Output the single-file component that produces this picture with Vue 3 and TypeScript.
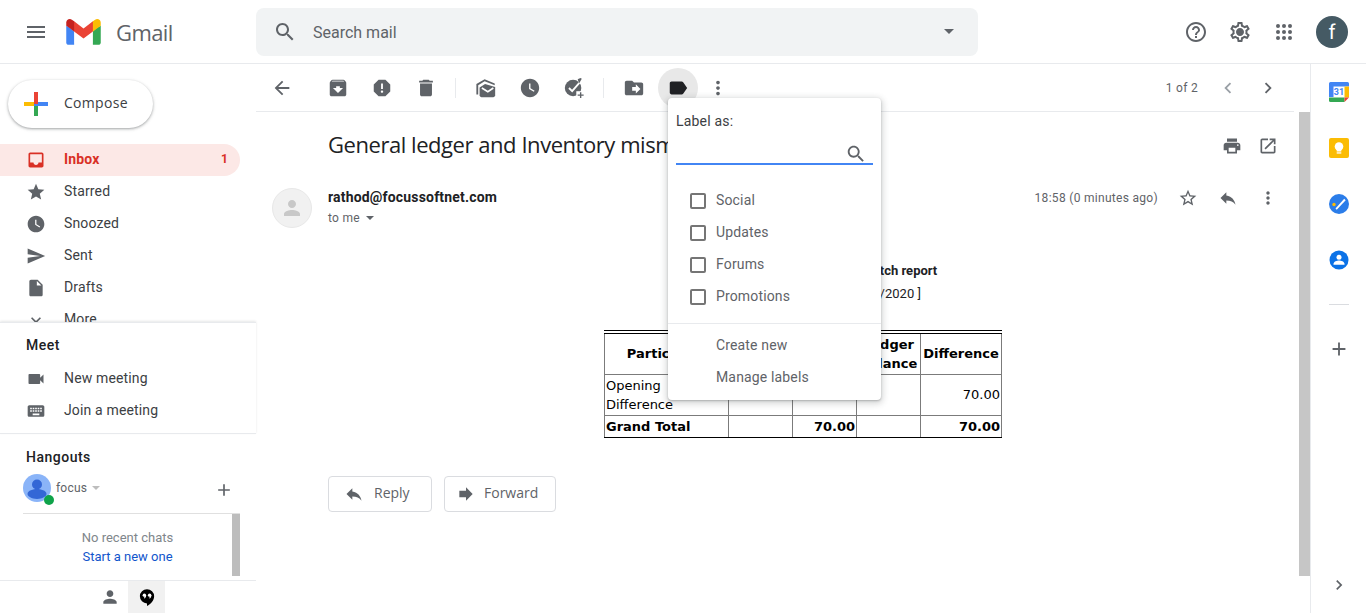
<template>
  <div class="app">
    <header class="topbar">
      <div class="brand">
        <button class="menu-btn"><svg class="ic" viewBox="0 0 24 24"><path :d="icons.menu" /></svg></button>
        <svg class="logo" viewBox="0 0 256 193">
          <path fill="#4285F4" d="M58.182 192.05V93.14L27.507 65.077 0 49.504v125.091c0 9.658 7.825 17.455 17.455 17.455h40.727z" />
          <path fill="#34A853" d="M197.818 192.05h40.727c9.659 0 17.455-7.826 17.455-17.455V49.505l-31.156 17.837-27.026 25.798v98.91z" />
          <path fill="#EA4335" d="M58.182 93.14l-4.174-38.647 4.174-36.989L128 69.868l69.818-52.364 4.669 34.992-4.669 40.644L128 145.504z" />
          <path fill="#FBBC04" d="M197.818 17.504V93.14L256 49.504V26.231c0-21.585-24.64-33.89-41.89-20.945l-16.292 12.218z" />
          <path fill="#C5221F" d="M0 49.504l26.759 20.07L58.182 93.14V17.504L41.89 5.286C24.61-7.66 0 4.646 0 26.23v23.273z" />
        </svg>
        <span class="wordmark">Gmail</span>
      </div>
      <div class="search">
        <svg class="ic search-ic" viewBox="0 0 24 24"><path :d="icons.search" /></svg>
        <span class="search-text">Search mail</span>
        <span class="caret search-caret"></span>
      </div>
      <div class="top-actions">
        <svg class="ic top-ic" viewBox="0 0 24 24"><path :d="icons.help" /></svg>
        <svg class="ic top-ic" viewBox="0 0 24 24"><path :d="icons.settings" /></svg>
        <svg class="ic top-ic" viewBox="0 0 24 24">
          <circle v-for="d in appDots" :key="d[0] + '-' + d[1]" :cx="d[0]" :cy="d[1]" r="2" />
        </svg>
        <div class="account">f</div>
      </div>
    </header>

    <div class="body">
      <aside class="sidebar">
        <div class="side-top">
          <button class="compose">
            <svg class="plus" viewBox="0 0 24 24">
              <rect x="0" y="10" width="10" height="4" fill="#fbbc04" />
              <rect x="14" y="10" width="10" height="4" fill="#4285f4" />
              <rect x="10" y="14" width="4" height="10" fill="#34a853" />
              <rect x="10" y="10" width="4" height="4" fill="#4285f4" />
              <rect x="10" y="0" width="4" height="12" fill="#ea4335" />
            </svg>
            <span class="compose-text">Compose</span>
          </button>
          <nav class="nav">
            <div v-for="item in navItems" :key="item.label" class="nav-row" :class="{ active: item.count }">
              <svg class="ic nav-ic" viewBox="0 0 24 24"><path :d="item.icon" /></svg>
              <span class="nav-label">{{ item.label }}</span>
              <span v-if="item.count" class="nav-count">{{ item.count }}</span>
            </div>
          </nav>
        </div>

        <section class="meet">
          <h3>Meet</h3>
          <div class="meet-row">
            <svg class="ic nav-ic" viewBox="0 0 24 24"><path :d="icons.video" /></svg>
            <span class="nav-label">New meeting</span>
          </div>
          <div class="meet-row">
            <svg class="ic nav-ic" viewBox="0 0 24 24"><path :d="icons.keyboard" /></svg>
            <span class="nav-label">Join a meeting</span>
          </div>
        </section>

        <section class="hangouts">
          <h3>Hangouts</h3>
          <div class="hang-user">
            <div class="hang-avatar">
              <svg viewBox="0 0 28 28" width="28" height="28">
                <circle cx="14" cy="14" r="14" fill="#8ab4f8" />
                <circle cx="14" cy="10.5" r="5" fill="#3367d6" />
                <path d="M4.5 20c0-3.600 6-5 9.500-5s9.500 1.400 9.500 5c0 2-4 5-9.500 5S4.500 22 4.500 20z" fill="#3367d6" />
              </svg>
              <span class="hang-dot"></span>
            </div>
            <span class="hang-name">focus</span>
            <span class="caret hang-caret"></span>
            <svg class="ic hang-add" viewBox="0 0 24 24"><path :d="icons.plus" /></svg>
          </div>
          <div class="chats">
            <div class="chats-text">
              <span class="no-chats">No recent chats</span>
              <span class="start-chat">Start a new one</span>
            </div>
            <div class="chat-scroll"></div>
          </div>
        </section>

        <div class="side-tabs">
          <div class="side-tab">
            <svg class="ic tab-ic" viewBox="0 0 24 24"><path :d="icons.person" /></svg>
          </div>
          <div class="side-tab on">
            <svg class="tab-ic chat-ic" viewBox="0 0 24 24">
              <path fill="#000" d="M12 1.500A9.500 9.500 0 0 0 2.500 11 9.500 9.500 0 0 0 12 20.500v3.500c5-2.500 9.500-7.500 9.500-13A9.500 9.500 0 0 0 12 1.500z" />
              <circle cx="8.500" cy="9.500" r="2.300" fill="#fff" />
              <circle cx="15.500" cy="9.500" r="2.300" fill="#fff" />
              <path fill="#fff" d="M9 9.500h1.800c0 2.200-1 4-2.800 4.500zM16 9.500h1.800c0 2.200-1 4-2.800 4.500z" />
            </svg>
          </div>
        </div>
      </aside>

      <main class="main">
        <div class="toolbar">
          <button class="tool back"><svg class="ic" viewBox="0 0 24 24"><path :d="icons.back" /></svg></button>
          <button class="tool"><svg class="ic" viewBox="0 0 24 24"><path :d="icons.archive" /></svg></button>
          <button class="tool"><svg class="ic" viewBox="0 0 24 24"><path :d="icons.spam" /></svg></button>
          <button class="tool"><svg class="ic" viewBox="0 0 24 24"><path :d="icons.trash" /></svg></button>
          <span class="tool-sep"></span>
          <button class="tool">
            <svg class="ic" viewBox="0 0 24 24">
              <path d="M1.500 19V7.500L10.500 2.500l11 4.500v2l-11-4.500L3.500 9v10z" />
              <path d="M5 11.500L11 7.500l11 3.500v9a2 2 0 0 1-2 2H7a2 2 0 0 1-2-2z" />
              <path d="M7.500 12l6.500 4 6-4" fill="none" stroke="#fff" stroke-width="1.800" />
            </svg>
          </button>
          <button class="tool"><svg class="ic" viewBox="0 0 24 24"><path :d="icons.snooze" /></svg></button>
          <button class="tool">
            <svg class="ic" viewBox="0 0 24 24">
              <circle cx="11" cy="12" r="9" />
              <path d="M6.500 12l3.500 3.500 9-10.500" fill="none" stroke="#fff" stroke-width="2" />
              <path d="M16 2.500l3-1.500 1.500 1-3 5z" />
              <rect x="14.500" y="15.500" width="9.500" height="8.500" fill="#fff" />
              <path d="M18.500 16.500h1.500v2.500h2.500v1.500H20V23h-1.500v-2.500H16V19h2.500z" />
            </svg>
          </button>
          <span class="tool-sep"></span>
          <button class="tool"><svg class="ic" viewBox="0 0 24 24"><path :d="icons.move" /></svg></button>
          <button class="tool pressed"><svg class="ic" viewBox="0 0 24 24"><path :d="icons.label" /></svg></button>
          <button class="tool narrow"><svg class="ic" viewBox="0 0 24 24"><path :d="icons.more" /></svg></button>
          <span class="pager">1 of 2</span>
          <button class="tool faint"><svg class="ic" viewBox="0 0 24 24"><path :d="icons.left" /></svg></button>
          <button class="tool"><svg class="ic" viewBox="0 0 24 24"><path :d="icons.right" /></svg></button>
        </div>

        <div class="view">
          <div class="mail">
            <div class="subject-row">
              <h1>General ledger and Inventory mismatch report</h1>
              <svg class="ic sub-ic" viewBox="0 0 24 24"><path :d="icons.print" /></svg>
              <svg class="ic sub-ic" viewBox="0 0 24 24"><path :d="icons.open" /></svg>
            </div>

            <div class="sender-row">
              <div class="sender-pic">
                <svg viewBox="0 0 24 24" width="24" height="24"><path fill="#c8c8c8" :d="icons.person" /></svg>
              </div>
              <div class="sender-info">
                <div class="sender-name">rathod@focussoftnet.com</div>
                <div class="sender-to">to me <span class="caret to-caret"></span></div>
              </div>
              <span class="sent-time">18:58 (0 minutes ago)</span>
              <svg class="ic msg-ic" viewBox="0 0 24 24"><path :d="icons.starOutline" /></svg>
              <svg class="ic msg-ic" viewBox="0 0 24 24"><path :d="icons.reply" /></svg>
              <svg class="ic msg-ic" viewBox="0 0 24 24"><path :d="icons.more" /></svg>
            </div>

            <div class="report">
              <div class="report-title">General ledger and Inventory mismatch report</div>
              <div class="report-range">[ From Date 01/04/2020 To 30/06/2020 ]</div>
              <table class="report-table">
                <colgroup>
                  <col v-for="w in colWidths" :key="w.id" :style="{ width: w.px + 'px' }" />
                </colgroup>
                <tr class="head">
                  <th class="single">Particulars</th>
                  <th>Stock<br />Qty</th>
                  <th>Stock<br />Value</th>
                  <th>Ledger<br />Balance</th>
                  <th class="single">Difference</th>
                </tr>
                <tr class="open-row">
                  <td>Opening Difference</td>
                  <td></td>
                  <td></td>
                  <td></td>
                  <td class="num">70.00</td>
                </tr>
                <tr class="total">
                  <td>Grand Total</td>
                  <td></td>
                  <td class="num">70.00</td>
                  <td></td>
                  <td class="num">70.00</td>
                </tr>
              </table>
            </div>

            <div class="reply-actions">
              <button class="reply-btn to-sender">
                <svg class="ic" viewBox="0 0 24 24"><path :d="icons.reply" /></svg>
                <span class="reply-text">Reply</span>
              </button>
              <button class="reply-btn onward">
                <svg class="ic" viewBox="0 0 24 24"><path :d="icons.forward" /></svg>
                <span class="reply-text">Forward</span>
              </button>
            </div>
          </div>
          <div class="main-scroll"></div>
        </div>

        <!-- label picker opened from the toolbar -->
        <div class="label-menu">
          <div class="label-title">Label as:</div>
          <div class="label-input">
            <svg class="ic" viewBox="0 0 24 24"><path :d="icons.search" /></svg>
          </div>
          <div class="label-list">
            <div v-for="l in labels" :key="l" class="label-row">
              <span class="check"></span>
              <span class="nav-label">{{ l }}</span>
            </div>
          </div>
          <div class="label-foot">
            <div class="label-link">Create new</div>
            <div class="label-link">Manage labels</div>
          </div>
        </div>
      </main>

      <aside class="rail">
        <svg class="rail-ic" viewBox="0 0 20 20">
          <rect x="0" y="0" width="20" height="20" rx="1.500" fill="#fff" />
          <path fill="#4285f4" d="M1.500 0H18.500A1.500 1.500 0 0 1 20 1.500V4.500H4.500V15H0V1.500A1.500 1.500 0 0 1 1.500 0z" />
          <path fill="#fbbc04" d="M15.500 4.500H20V15.500h-4.500z" />
          <path fill="#34a853" d="M0 15.500h15.500V20H1.500A1.500 1.500 0 0 1 0 18.500z" />
          <path fill="#ea4335" d="M15.500 15.500H20l-4.500 4.500z" />
          <text x="10" y="13.200" class="cal-num">31</text>
        </svg>
        <svg class="rail-ic" viewBox="0 0 20 20">
          <rect x="0" y="0" width="20" height="20" rx="2" fill="#fbbc04" />
          <circle cx="10" cy="8.500" r="4.300" fill="#fff" />
          <rect x="7.700" y="11" width="4.600" height="2.500" fill="#fff" />
          <rect x="7.700" y="14.300" width="4.600" height="1.300" fill="#fff" />
        </svg>
        <svg class="rail-ic" viewBox="0 0 20 20">
          <circle cx="10" cy="10" r="10" fill="#2b7de9" />
          <circle cx="5" cy="10.500" r="1.700" fill="#fbbc04" />
          <path d="M6.500 14.500l1.200 1.200 9-9.500-1.500-1.500z" fill="#fff" />
        </svg>
        <svg class="rail-ic" viewBox="0 0 20 20">
          <circle cx="10" cy="10" r="9.500" fill="#0b72e7" />
          <circle cx="10" cy="7.200" r="2.500" fill="#fff" />
          <path d="M4.500 14c0-2.500 3.500-3.500 5.500-3.500s5.500 1 5.500 3.500v.8h-11z" fill="#fff" />
        </svg>
        <div class="rail-sep"></div>
        <svg class="ic rail-plus" viewBox="0 0 24 24"><path :d="icons.plus" /></svg>
        <svg class="ic rail-expand" viewBox="0 0 24 24"><path :d="icons.right" /></svg>
      </aside>
    </div>
  </div>
</template>

<script setup lang="ts">
const icons = {
  menu: 'M3 18h18v-2H3v2zm0-5h18v-2H3v2zm0-7v2h18V6H3z',
  search: 'M15.5 14h-.79l-.28-.27C15.41 12.59 16 11.11 16 9.5 16 5.91 13.09 3 9.5 3S3 5.91 3 9.5 5.91 16 9.5 16c1.61 0 3.09-.59 4.23-1.57l.27.28v.79l5 4.99L20.49 19l-4.99-5zm-6 0C7.01 14 5 11.99 5 9.5S7.01 5 9.5 5 14 7.01 14 9.500 11.99 14 9.500 14z',
  help: 'M11 18h2v-2h-2v2zm1-16C6.480 2 2 6.480 2 12s4.480 10 10 10 10-4.480 10-10S17.520 2 12 2zm0 18c-4.410 0-8-3.590-8-8s3.590-8 8-8 8 3.590 8 8-3.590 8-8 8zm0-14c-2.210 0-4 1.790-4 4h2c0-1.100.9-2 2-2s2 .9 2 2c0 2-3 1.750-3 5h2c0-2.250 3-2.500 3-5 0-2.210-1.790-4-4-4z',
  settings: 'M19.430 12.980c.04-.32.07-.64.07-.98 0-.34-.03-.66-.07-.98l2.110-1.650c.19-.15.24-.42.12-.64l-2-3.460c-.09-.16-.26-.25-.44-.25-.06 0-.12.01-.17.03l-2.490 1c-.52-.4-1.080-.73-1.690-.98l-.38-2.650C14.460 2.180 14.250 2 14 2h-4c-.25 0-.46.18-.49.42l-.38 2.650c-.61.25-1.170.59-1.690.98l-2.490-1c-.06-.02-.12-.03-.18-.03-.17 0-.34.09-.43.25l-2 3.460c-.13.22-.07.49.12.64l2.110 1.650c-.04.32-.07.65-.07.98 0 .33.03.66.07.98l-2.110 1.650c-.19.15-.24.42-.12.64l2 3.460c.09.16.26.25.44.25.06 0 .12-.01.17-.03l2.490-1c.52.4 1.080.73 1.690.98l.38 2.650c.03.24.24.42.49.42h4c.25 0 .46-.18.49-.42l.38-2.650c.61-.25 1.170-.59 1.690-.98l2.490 1c.06.02.12.03.18.03.17 0 .34-.09.43-.25l2-3.460c.12-.22.07-.49-.12-.64l-2.110-1.650zm-1.980-1.710c.04.31.05.52.05.73 0 .21-.02.43-.05.73l-.14 1.130.89.7 1.080.84-.7 1.210-1.270-.51-1.040-.42-.9.68c-.43.32-.84.56-1.250.73l-1.060.43-.16 1.130-.2 1.350h-1.400l-.19-1.350-.16-1.130-1.060-.43c-.43-.18-.83-.41-1.230-.71l-.91-.7-1.060.43-1.270.51-.7-1.210 1.080-.84.89-.7-.14-1.130c-.03-.31-.05-.54-.05-.74s.02-.43.05-.73l.14-1.130-.89-.7-1.080-.84.7-1.210 1.270.51 1.040.42.9-.68c.43-.32.84-.56 1.250-.73l1.060-.43.16-1.130.2-1.350h1.390l.19 1.350.16 1.130 1.060.43c.43.18.83.41 1.230.71l.91.7 1.060-.43 1.270-.51.7 1.210-1.070.85-.89.7.14 1.130zM12 8c-2.210 0-4 1.790-4 4s1.790 4 4 4 4-1.790 4-4-1.790-4-4-4z',
  inbox: 'M19 3H5c-1.100 0-2 .9-2 2v14c0 1.100.9 2 2 2h14c1.100 0 2-.9 2-2V5c0-1.100-.9-2-2-2zm0 12h-4c0 1.660-1.350 3-3 3s-3-1.340-3-3H5V5h14v10z',
  star: 'M12 17.270L18.180 21l-1.640-7.030L22 9.240l-7.190-.61L12 2 9.190 8.630 2 9.240l5.460 4.730L5.820 21z',
  starOutline: 'M22 9.240l-7.190-.62L12 2 9.190 8.630 2 9.240l5.460 4.730L5.820 21 12 17.270 18.180 21l-1.630-7.030L22 9.240zM12 15.400l-3.760 2.270 1-4.280-3.320-2.880 4.380-.38L12 6.100l1.710 4.040 4.380.38-3.320 2.880 1 4.280L12 15.400z',
  snooze: 'M12 2C6.500 2 2 6.500 2 12s4.500 10 10 10 10-4.500 10-10S17.500 2 12 2zm4.200 14.200L11 13V7h1.500v5.200l4.500 2.700-.8 1.300z',
  send: 'M2.010 21L23 12 2.010 3 2 10l15 2-15 2z',
  draft: 'M6 2c-1.100 0-1.990.9-1.990 2L4 20c0 1.100.89 2 1.990 2H18c1.100 0 2-.9 2-2V8l-6-6H6zm7 7V3.500L18.500 9H13z',
  expand: 'M16.590 8.590L12 13.170 7.410 8.590 6 10l6 6 6-6z',
  video: 'M17 10.500V7c0-.55-.45-1-1-1H4c-.55 0-1 .45-1 1v10c0 .55.45 1 1 1h12c.55 0 1-.45 1-1v-3.500l4 4v-11l-4 4z',
  keyboard: 'M20 5H4c-1.100 0-1.990.9-1.990 2L2 17c0 1.100.9 2 2 2h16c1.100 0 2-.9 2-2V7c0-1.100-.9-2-2-2zm-9 3h2v2h-2V8zm0 3h2v2h-2v-2zM8 8h2v2H8V8zm0 3h2v2H8v-2zm-1 2H5v-2h2v2zm0-3H5V8h2v2zm9 7H8v-2h8v2zm0-4h-2v-2h2v2zm0-3h-2V8h2v2zm3 3h-2v-2h2v2zm0-3h-2V8h2v2z',
  person: 'M12 12c2.210 0 4-1.790 4-4s-1.790-4-4-4-4 1.790-4 4 1.790 4 4 4zm0 2c-2.670 0-8 1.340-8 4v2h16v-2c0-2.660-5.330-4-8-4z',
  plus: 'M19 13h-6v6h-2v-6H5v-2h6V5h2v6h6v2z',
  back: 'M20 11H7.830l5.590-5.590L12 4l-8 8 8 8 1.410-1.410L7.830 13H20v-2z',
  archive: 'M20.540 5.230l-1.390-1.680C18.880 3.210 18.470 3 18 3H6c-.47 0-.88.21-1.160.55L3.460 5.230C3.170 5.570 3 6.020 3 6.500V19c0 1.100.9 2 2 2h14c1.100 0 2-.9 2-2V6.500c0-.48-.17-.93-.46-1.270zM12 17.500L6.500 12H10v-2h4v2h3.500L12 17.500zM5.120 5l.81-1h12l.94 1H5.120z',
  spam: 'M15.730 3H8.270L3 8.270v7.460L8.270 21h7.460L21 15.730V8.270L15.730 3zM12 17.300c-.72 0-1.300-.58-1.300-1.300 0-.72.58-1.300 1.300-1.300.72 0 1.300.58 1.300 1.300 0 .72-.58 1.300-1.300 1.300zm1-4.300h-2V7h2v6z',
  trash: 'M5.500 19c0 1.100.9 2 2 2h9c1.100 0 2-.9 2-2V7h-13v12zM19.500 4H16l-1-1H9L8 4H4.500v2h15V4z',
  move: 'M20 6h-8l-2-2H4c-1.100 0-1.990.9-1.990 2L2 18c0 1.100.9 2 2 2h16c1.100 0 2-.9 2-2V8c0-1.100-.9-2-2-2zm-6 12v-3h-4v-4h4V8l5 5-5 5z',
  label: 'M17.630 5.840C17.270 5.330 16.670 5 16 5L5 5.010C3.900 5.010 3 5.900 3 7v10c0 1.100.9 1.990 2 1.990L16 19c.67 0 1.270-.33 1.630-.84L22 12l-4.370-6.160z',
  more: 'M12 8c1.100 0 2-.9 2-2s-.9-2-2-2-2 .9-2 2 .9 2 2 2zm0 2c-1.100 0-2 .9-2 2s.9 2 2 2 2-.9 2-2-.9-2-2-2zm0 6c-1.100 0-2 .9-2 2s.9 2 2 2 2-.9 2-2-.9-2-2-2z',
  left: 'M15.410 7.410L14 6l-6 6 6 6 1.410-1.410L10.830 12z',
  right: 'M10 6L8.590 7.410 13.170 12l-4.580 4.590L10 18l6-6z',
  print: 'M19 8H5c-1.660 0-3 1.340-3 3v6h4v4h12v-4h4v-6c0-1.660-1.340-3-3-3zm-3 11H8v-5h8v5zm3-7c-.55 0-1-.45-1-1s.45-1 1-1 1 .45 1 1-.45 1-1 1zm-1-9H6v4h12V3z',
  open: 'M19 19H5V5h7V3H5c-1.110 0-2 .9-2 2v14c0 1.100.89 2 2 2h14c1.100 0 2-.9 2-2v-7h-2v7zM14 3v2h3.590l-9.830 9.830 1.410 1.410L19 6.410V10h2V3h-7z',
  reply: 'M10 9V5l-7 7 7 7v-4.100c5 0 8.500 1.600 11 5.100-1-5-4-10-11-11z',
  forward: 'M12 8V4l8 8-8 8v-4H4V8z',
}

const navItems = [
  { label: 'Inbox', icon: icons.inbox, count: 1 },
  { label: 'Starred', icon: icons.star },
  { label: 'Snoozed', icon: icons.snooze },
  { label: 'Sent', icon: icons.send },
  { label: 'Drafts', icon: icons.draft },
  { label: 'More', icon: icons.expand },
]

const appDots = [6, 12, 18].flatMap((x) => [6, 12, 18].map((y) => [x, y]))

const colWidths = [
  { id: 'name', px: 124 },
  { id: 'qty', px: 64 },
  { id: 'value', px: 64 },
  { id: 'ledger', px: 64 },
  { id: 'diff', px: 81 },
]

const labels = ['Social', 'Updates', 'Forums', 'Promotions']
</script>

<style scoped>
.app {
  height: 613px;
  display: flex;
  flex-direction: column;
  overflow: hidden;
  background: #fff;
  color: #202124;
  font-family: Roboto, "Liberation Sans", sans-serif;
  font-size: 14px;
}
button {
  font: inherit;
  border: 0;
  background: none;
  padding: 0;
  color: inherit;
}
.ic {
  fill: #5f6368;
  display: block;
  flex: none;
}
.caret {
  display: inline-block;
  width: 0;
  height: 0;
  border-left: 5px solid transparent;
  border-right: 5px solid transparent;
  border-top: 5px solid #5f6368;
}

/* top bar */
.topbar {
  height: 64px;
  flex: none;
  box-sizing: border-box;
  border-bottom: 1px solid #e8eaed;
  display: flex;
  align-items: center;
}
.brand {
  width: 256px;
  flex: none;
  display: flex;
  align-items: center;
}
.menu-btn {
  width: 24px;
  height: 24px;
  margin-left: 24px;
}
.logo {
  width: 35px;
  height: 26px;
  margin-left: 18px;
}
.wordmark {
  margin-left: 15px;
  font-family: "Open Sans", sans-serif;
  font-size: 22px;
  color: #5f6368;
  letter-spacing: -0.6px;
}
.search {
  width: 722px;
  height: 48px;
  flex: none;
  box-sizing: border-box;
  background: #f1f3f4;
  border-radius: 8px;
  display: flex;
  align-items: center;
  padding: 0 24px 0 17px;
}
.search-ic {
  width: 24px;
  height: 24px;
}
.search-text {
  margin-left: 16px;
  padding-top: 2px;
  font-size: 16px;
  color: #5f6368;
}
.search-caret {
  margin-left: auto;
}
.top-actions {
  margin-left: auto;
  display: flex;
  align-items: center;
  gap: 20px;
  padding-right: 18px;
}
.account {
  width: 32px;
  height: 32px;
  border-radius: 50%;
  background: #455a64;
  color: #fff;
  font-size: 20px;
  line-height: 32px;
  text-align: center;
}

.body {
  flex: 1;
  min-height: 0;
  display: flex;
}

/* left column */
.sidebar {
  width: 256px;
  flex: none;
  display: flex;
  flex-direction: column;
}
.side-top {
  height: 258px;
  flex: none;
  overflow: hidden;
  padding-top: 16px;
  box-sizing: border-box;
}
.compose {
  width: 145px;
  height: 48px;
  margin-left: 8px;
  border-radius: 24px;
  background: #fff;
  box-shadow: 0 1px 2px rgba(60, 64, 67, 0.3), 0 1px 3px 1px rgba(60, 64, 67, 0.15);
  display: flex;
  align-items: center;
  padding-left: 16px;
  box-sizing: border-box;
  font-size: 14px;
  font-weight: 500;
  color: #3c4043;
  letter-spacing: 0.3px;
  font-family: "Open Sans", sans-serif;
}
.compose-text {
  padding-bottom: 4px;
}
.plus {
  width: 24px;
  height: 24px;
  margin-right: 16px;
}
.nav {
  margin-top: 16px;
}
.nav-row {
  width: 240px;
  height: 32px;
  box-sizing: border-box;
  display: flex;
  align-items: center;
  padding-left: 26px;
  border-radius: 0 16px 16px 0;
  color: #3c4043;
}
.nav-ic {
  width: 20px;
  height: 20px;
}
.nav-label {
  padding-bottom: 2px;
  letter-spacing: 0.15px;
}
.nav-row .nav-label {
  margin-left: 18px;
}
.nav-row.active {
  background: #fce8e6;
  color: #d93025;
  font-weight: 700;
  padding-right: 12px;
}
.nav-row.active .ic {
  fill: #d93025;
}
.nav-count {
  margin-left: auto;
  font-size: 12px;
  padding-bottom: 2px;
}
.meet,
.hangouts {
  padding-left: 26px;
}
.meet {
  height: 112px;
  flex: none;
  box-sizing: border-box;
  border-top: 1px solid #e8eaed;
  box-shadow: 0 -1px 2px rgba(60, 64, 67, 0.12);
  border-bottom: 1px solid #e8eaed;
  position: relative;
  background: #fff;
}
h3 {
  margin: 0;
  font-size: 14px;
  font-weight: 500;
  line-height: 20px;
  letter-spacing: 0.5px;
}
.meet h3 {
  margin-top: 12px;
  margin-bottom: 8px;
}
.meet-row {
  height: 32px;
  display: flex;
  align-items: center;
  gap: 18px;
  color: #3c4043;
}
.hangouts {
  height: 147px;
  flex: none;
  box-sizing: border-box;
  border-bottom: 1px solid #e8eaed;
  padding-top: 13px;
}
.hang-user {
  height: 28px;
  margin: 7px 16px 0 -3px;
  display: flex;
  align-items: center;
}
.hang-avatar {
  position: relative;
  width: 28px;
  height: 28px;
}
.hang-dot {
  position: absolute;
  right: -3px;
  bottom: -3px;
  width: 10px;
  height: 10px;
  border-radius: 50%;
  background: #0fa34a;
}
.hang-name {
  margin-left: 5px;
  font-size: 12px;
  letter-spacing: 0.2px;
  color: #5f6368;
}
.hang-caret {
  margin-left: 5px;
  border-left-width: 4px;
  border-right-width: 4px;
  border-top-color: #bdbdbd;
  border-top-width: 4px;
}
.hang-add {
  width: 20px;
  height: 20px;
  margin-left: auto;
  margin-right: 6px;
  margin-top: 4px;
}
.chats {
  margin: 11px 16px 0 -3px;
  border-top: 1px solid #e0e0e0;
  height: 62px;
  display: flex;
}
.chats-text {
  flex: 1;
  display: flex;
  flex-direction: column;
  align-items: center;
  padding-top: 14px;
  font-size: 13px;
  line-height: 19px;
}
.no-chats {
  color: #80868b;
}
.start-chat {
  color: #1155cc;
}
.chat-scroll {
  width: 8px;
  background: #bdbdbd;
}
.side-tabs {
  flex: 1;
  display: flex;
  justify-content: center;
}
.side-tab {
  width: 37px;
  display: flex;
  align-items: center;
  justify-content: center;
}
.side-tab.on {
  background: #f1f1f1;
}
.tab-ic {
  width: 20px;
  height: 20px;
}
.chat-ic {
  width: 18px;
  height: 18px;
}

/* message pane */
.main {
  flex: 1;
  min-width: 0;
  position: relative;
  display: flex;
  flex-direction: column;
}
.toolbar {
  height: 48px;
  flex: none;
  box-sizing: border-box;
  margin-right: 16px;
  border-bottom: 1px solid #e8eaed;
  display: flex;
  align-items: center;
  gap: 4px;
  padding: 0 6px;
}
.tool {
  width: 40px;
  height: 40px;
  flex: none;
  display: flex;
  align-items: center;
  justify-content: center;
  border-radius: 50%;
}
.tool .ic {
  width: 22px;
  height: 22px;
}
.tool.back {
  margin-right: 12px;
}
.tool.narrow {
  width: 32px;
}
.tool.pressed {
  background: #e8e8e8;
}
.tool.pressed .ic {
  fill: #202124;
}
.tool.faint .ic {
  fill: #9aa0a6;
}
.tool-sep {
  width: 1px;
  height: 20px;
  flex: none;
  background: #e8eaed;
  margin: 0 6px 0 5px;
}
.pager {
  margin-left: auto;
  margin-right: 6px;
  font-size: 12px;
  letter-spacing: 0.3px;
  color: #5f6368;
}
.tool.faint {
  margin-right: -4px;
}
.view {
  flex: 1;
  min-height: 0;
  display: flex;
}
.mail {
  flex: 1;
  min-width: 0;
  box-sizing: border-box;
  padding: 0 21px 0 16px;
}
.main-scroll {
  width: 11px;
  height: 464px;
  flex: none;
  background: #c6c6c6;
}
.subject-row {
  height: 68px;
  display: flex;
  align-items: center;
  padding-left: 56px;
  padding-bottom: 1px;
  box-sizing: border-box;
}
h1 {
  margin: 0 auto 4px 0;
  font-family: "Open Sans", sans-serif;
  font-size: 22px;
  font-weight: 400;
  letter-spacing: -0.45px;
}
.sub-ic {
  width: 20px;
  height: 20px;
  margin-left: 16px;
}
.sender-row {
  display: flex;
  align-items: flex-start;
  padding-top: 8px;
}
.sender-pic {
  width: 40px;
  height: 40px;
  box-sizing: border-box;
  border: 1px solid #e8e8e8;
  border-radius: 50%;
  background: #f1f1f1;
  display: flex;
  align-items: center;
  justify-content: center;
}
.sender-info {
  margin-left: 16px;
}
.sender-name {
  font-weight: 700;
  font-size: 14px;
  line-height: 20px;
  letter-spacing: 0.18px;
  margin-top: -1px;
  margin-bottom: 1px;
}
.sender-to {
  font-size: 12px;
  line-height: 20px;
  letter-spacing: 0.3px;
  color: #5f6368;
}
.to-caret {
  margin-left: 3px;
  border-left-width: 4px;
  border-right-width: 4px;
  border-top-width: 4px;
  vertical-align: 2px;
}
.sent-time {
  margin-left: auto;
  font-size: 12px;
  line-height: 20px;
  letter-spacing: 0.3px;
  color: #5f6368;
  margin-right: 20px;
}
.msg-ic {
  width: 20px;
  height: 20px;
  margin-left: 20px;
}
.sent-time + .msg-ic {
  margin-left: 0;
}
.report {
  margin-left: 56px;
  padding-top: 33px;
  font-size: 12px;
  text-align: center;
}
.report-title {
  font-size: 13px;
  font-weight: 700;
  line-height: 20px;
}
.report-range {
  font-size: 13px;
  line-height: 20px;
  margin-top: 3px;
}
.report-table {
  margin: 26px auto 0;
  border-collapse: collapse;
  table-layout: fixed;
  width: 397px;
  font-family: "DejaVu Sans", sans-serif;
  font-size: 13px;
  color: #000;
  border: 1px solid #000;
  border-top: 4px double #000;
  text-align: left;
}
.report-table th,
.report-table td {
  border: 1px solid #7b7b7b;
  padding: 0 1px;
  line-height: 19px;
}
.report-table th {
  text-align: center;
  height: 40px;
}
.open-row td {
  height: 40px;
}
.report-table th.single,
.report-table .open-row .num {
  height: 38px;
  padding-bottom: 2px;
}
.total td {
  height: 21px;
  font-weight: 700;
  border-top-color: #000;
  border-bottom-color: #000;
}
.report-table .num {
  text-align: right;
}
.reply-actions {
  margin: 38px 0 0 56px;
  display: flex;
  gap: 12px;
}
.reply-btn {
  height: 36px;
  box-sizing: border-box;
  border: 1px solid #dadce0;
  border-radius: 4px;
  display: flex;
  align-items: center;
  font-family: "Open Sans", sans-serif;
  font-size: 14px;
  font-weight: 500;
  color: #5f6368;
}
.reply-btn.to-sender {
  width: 104px;
  gap: 10px;
  padding-left: 15px;
}
.reply-btn.onward {
  width: 112px;
  gap: 8px;
  padding-left: 11px;
}
.reply-text {
  padding-bottom: 4px;
}
.reply-btn .ic {
  width: 20px;
  height: 20px;
}

/* label dropdown */
.label-menu {
  position: absolute;
  left: 412px;
  top: 34px;
  width: 213px;
  height: 302px;
  box-sizing: border-box;
  background: #fff;
  border-radius: 4px;
  box-shadow: 0 2px 6px 2px rgba(60, 64, 67, 0.2), 0 1px 2px rgba(60, 64, 67, 0.3);
  padding-top: 13px;
  color: #3c4043;
}
.label-title {
  margin-left: 8px;
  line-height: 20px;
  letter-spacing: 0.2px;
}
.label-input {
  margin: 5px 8px 0;
  height: 27px;
  border-bottom: 2px solid #4285f4;
  display: flex;
  justify-content: flex-end;
  align-items: flex-end;
}
.label-input .ic {
  width: 22px;
  height: 22px;
  margin-right: 6px;
  margin-bottom: -2px;
}
.label-list {
  margin-top: 20px;
  padding-bottom: 10px;
  border-bottom: 1px solid #e8eaed;
}
.label-row {
  height: 32px;
  display: flex;
  align-items: center;
  padding-left: 22px;
  gap: 10px;
  color: #5f6368;
}
.check {
  width: 16px;
  height: 16px;
  box-sizing: border-box;
  border: 2px solid #757575;
  border-radius: 2px;
}
.label-foot {
  padding-top: 5px;
}
.label-link {
  height: 32px;
  line-height: 32px;
  padding-left: 48px;
  letter-spacing: 0.15px;
  color: #5f6368;
}

/* add-on rail */
.rail {
  width: 56px;
  flex: none;
  box-sizing: border-box;
  border-left: 1px solid #e8eaed;
  display: flex;
  flex-direction: column;
  align-items: center;
  padding-top: 18px;
  padding-left: 1px;
}
.rail-ic {
  width: 20px;
  height: 20px;
  margin-bottom: 36px;
}
.cal-num {
  font-family: Roboto, sans-serif;
  font-size: 9px;
  font-weight: 700;
  fill: #4285f4;
  text-anchor: middle;
}
.rail-sep {
  width: 20px;
  height: 1px;
  background: #dadce0;
  margin-top: -2px;
}
.rail-plus {
  width: 22px;
  height: 22px;
  margin-top: 33px;
}
.rail-expand {
  width: 20px;
  height: 20px;
  margin-top: auto;
  margin-bottom: 18px;
}
.top-ic {
  width: 24px;
  height: 24px;
}
</style>
